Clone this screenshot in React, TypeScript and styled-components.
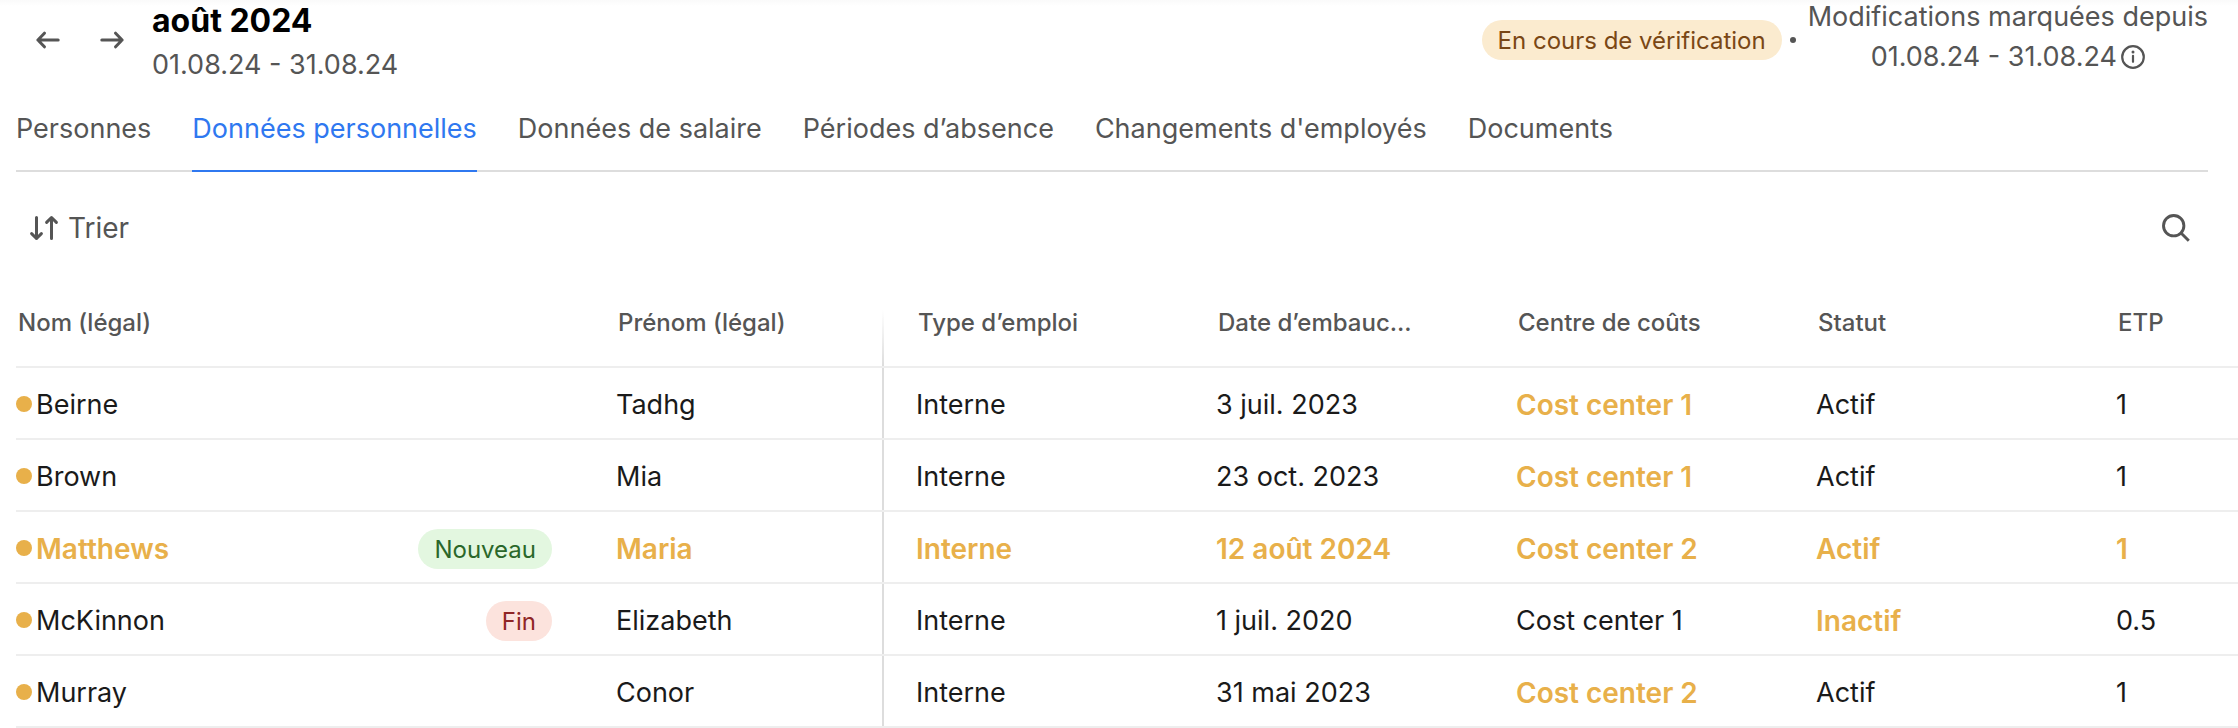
import React from 'react';
import styled, { createGlobalStyle, css } from 'styled-components';

const color = {
  text: '#1a1a1a',
  muted: '#555555',
  accent: '#2f78f0',
  changed: '#e8b04a',
  line: '#dddddd',
  rowLine: '#eeeeee',
};

const GlobalStyle = createGlobalStyle`
  *, *::before, *::after { box-sizing: border-box; }
  body {
    margin: 0;
    background: #ffffff;
    color: ${color.text};
    font: 400 27px/40px Inter, "Liberation Sans", sans-serif;
    overflow-x: hidden;
  }
  button { font: inherit; color: inherit; background: none; border: 0; padding: 0; cursor: pointer; }
`;

const Page = styled.main`
  background: linear-gradient(#fafafa, #ffffff) top / 100% 6px no-repeat;
`;

const Header = styled.header`
  display: flex;
  align-items: center;
  justify-content: space-between;
  height: 84px;
  padding: 0 30px 4px 24px;
`;

const Group = styled.div`
  display: flex;
  align-items: center;
`;

const IconButton = styled.button`
  display: flex;
  align-items: center;
  justify-content: center;
  width: 48px;
  height: 48px;
  color: ${color.muted};
`;

const Pager = styled.nav`
  display: flex;
  gap: 16px;
  margin-right: 16px;
`;

const Heading = styled.div`
  padding-top: 6px;
`;

const Title = styled.h1`
  margin: 0;
  font-size: 32px;
  font-weight: 700;
  line-height: 44px;
  color: #000000;
`;

const Period = styled.p`
  margin: 0;
  line-height: 44px;
  color: ${color.muted};
`;

const tones = {
  warning: css`background: #fbebcf; color: #7a4715;`,
  positive: css`background: #e3f7e0; color: #2a672a;`,
  negative: css`background: #fce3dd; color: #8f2626;`,
};

type Tone = keyof typeof tones;

const Badge = styled.span<{ $tone: Tone }>`
  display: inline-block;
  height: 40px;
  padding: 1px 16px 0;
  border-radius: 20px;
  font-size: 24px;
  font-weight: 400;
  line-height: 40px;
  white-space: nowrap;
  ${({ $tone }) => tones[$tone]}
`;

const Bullet = styled.span`
  width: 6px;
  height: 6px;
  margin: 0 12px 0 8px;
  border-radius: 50%;
  background: ${color.muted};
`;

const Tracking = styled.div`
  padding-bottom: 6px;
  color: ${color.muted};
  text-align: center;
`;

const TrackingPeriod = styled.div`
  display: flex;
  align-items: center;
  justify-content: center;
  gap: 4px;
`;

const Tabs = styled.nav`
  display: flex;
  gap: 41px;
  margin: 0 30px 0 16px;
  border-bottom: 2px solid ${color.line};
`;

const Tab = styled.a<{ $active?: boolean }>`
  height: 88px;
  margin-bottom: -2px;
  padding-top: 25px;
  border-bottom: 2px solid ${({ $active }) => ($active ? color.accent : 'transparent')};
  color: ${({ $active }) => ($active ? color.accent : color.muted)};
  text-decoration: none;
  white-space: nowrap;
`;

const Toolbar = styled.div`
  display: flex;
  align-items: center;
  justify-content: space-between;
  height: 112px;
  padding: 0 38px 0 28px;
`;

const SortButton = styled.button`
  display: flex;
  align-items: center;
  gap: 8px;
  height: 48px;
  && {
    color: ${color.muted};
    font-size: 28px;
  }
`;

const TableArea = styled.div`
  padding-left: 16px;
  overflow: hidden;
`;

const Table = styled.table`
  width: 100%;
  table-layout: fixed;
  border-collapse: separate;
  border-spacing: 0;
`;

const Col = styled.col<{ $width?: number }>`
  width: ${({ $width }) => ($width ? `${$width}px` : 'auto')};
`;

const HeadCell = styled.th<{ $pinned?: boolean }>`
  height: 84px;
  padding: 0 34px 4px;
  border-bottom: 2px solid ${color.rowLine};
  background: ${({ $pinned }) =>
    $pinned ? `linear-gradient(#ffffff 32%, ${color.line}) right / 2px 100% no-repeat` : 'none'};
  color: ${color.muted};
  font-size: 24px;
  font-weight: 500;
  text-align: left;
  white-space: nowrap;
  &:first-child { padding-left: 2px; }
  &:last-child { padding-right: 0; }
`;

const Cell = styled.td<{ $pinned?: boolean; $changed?: boolean }>`
  height: 72px;
  padding: 4px 32px 0;
  border-bottom: 2px solid ${color.rowLine};
  background: ${({ $pinned }) =>
    $pinned ? `linear-gradient(${color.line}, ${color.line}) right / 2px 100% no-repeat` : 'none'};
  color: ${({ $changed }) => ($changed ? color.changed : color.text)};
  font-size: ${({ $changed }) => ($changed ? 28 : 27)}px;
  font-weight: ${({ $changed }) => ($changed ? 600 : 400)};
  white-space: nowrap;
  &:first-child { padding-left: 0; }
  &:last-child { padding-right: 0; }
`;

const Name = styled.div`
  display: flex;
  align-items: center;
  gap: 4px;
  & > ${Badge} { margin-left: auto; }
`;

const Dot = styled.span`
  flex: none;
  width: 16px;
  height: 16px;
  margin-bottom: 2px;
  border-radius: 50%;
  background: ${color.changed};
`;

const strokeProps = {
  fill: 'none',
  stroke: 'currentColor',
  strokeLinecap: 'round' as const,
  strokeLinejoin: 'round' as const,
};

const ArrowLeft = () => (
  <svg width="24" height="24" viewBox="0 0 24 24" strokeWidth="3" aria-hidden="true" {...strokeProps}>
    <path d="M22.2 12H2M8.4 5.2 1.9 12l6.5 6.8" />
  </svg>
);

const ArrowRight = () => (
  <svg width="24" height="24" viewBox="0 0 24 24" strokeWidth="3" aria-hidden="true" {...strokeProps}>
    <path d="M1.8 12H22M15.6 5.2l6.5 6.8-6.5 6.8" />
  </svg>
);

const SortIcon = () => (
  <svg width="32" height="32" viewBox="0 0 32 32" strokeWidth="3" aria-hidden="true" {...strokeProps}>
    <path d="M8.5 5.5v21M3.6 21.6l4.9 4.9 4.9-4.9M23.5 26.5v-21M18.6 10.4l4.9-4.9 4.9 4.9" />
  </svg>
);

const SearchIcon = () => (
  <svg width="32" height="32" viewBox="0 0 32 32" strokeWidth="2.9" aria-hidden="true" {...strokeProps} strokeLinecap="butt">
    <circle cx="13.7" cy="13.7" r="10.2" />
    <path d="M21 21l7.8 7.8" />
  </svg>
);

const InfoIcon = () => (
  <svg width="24" height="24" viewBox="0 0 24 24" strokeWidth="2.2" aria-hidden="true" {...strokeProps}>
    <circle cx="12" cy="12" r="10.8" />
    <path d="M12 10.8v6" />
    <circle cx="12" cy="7" r="1.5" fill="currentColor" stroke="none" />
  </svg>
);

const tabs = [
  'Personnes',
  'Données personnelles',
  'Données de salaire',
  'Périodes d’absence',
  "Changements d'employés",
  'Documents',
];

const columns: { label: string; width?: number; pinned?: boolean }[] = [
  { label: 'Nom (légal)', width: 568 },
  { label: 'Prénom (légal)', width: 300, pinned: true },
  { label: 'Type d’emploi', width: 300 },
  { label: 'Date d’embauc...', width: 300 },
  { label: 'Centre de coûts', width: 300 },
  { label: 'Statut', width: 300 },
  { label: 'ETP' },
];

interface Employee {
  values: string[];
  changed: number[];
  badge?: { tone: Tone; label: string };
}

const employees: Employee[] = [
  { values: ['Beirne', 'Tadhg', 'Interne', '3 juil. 2023', 'Cost center 1', 'Actif', '1'], changed: [4] },
  { values: ['Brown', 'Mia', 'Interne', '23 oct. 2023', 'Cost center 1', 'Actif', '1'], changed: [4] },
  {
    values: ['Matthews', 'Maria', 'Interne', '12 août 2024', 'Cost center 2', 'Actif', '1'],
    changed: [0, 1, 2, 3, 4, 5, 6],
    badge: { tone: 'positive', label: 'Nouveau' },
  },
  {
    values: ['McKinnon', 'Elizabeth', 'Interne', '1 juil. 2020', 'Cost center 1', 'Inactif', '0.5'],
    changed: [5],
    badge: { tone: 'negative', label: 'Fin' },
  },
  { values: ['Murray', 'Conor', 'Interne', '31 mai 2023', 'Cost center 2', 'Actif', '1'], changed: [4] },
];

export default function App() {
  return (
    <Page>
      <GlobalStyle />
      <Header>
        <Group>
          <Pager aria-label="Période">
            <IconButton type="button" aria-label="Mois précédent"><ArrowLeft /></IconButton>
            <IconButton type="button" aria-label="Mois suivant"><ArrowRight /></IconButton>
          </Pager>
          <Heading>
            <Title>août 2024</Title>
            <Period>01.08.24 - 31.08.24</Period>
          </Heading>
        </Group>
        <Group>
          <Badge $tone="warning">En cours de vérification</Badge>
          <Bullet />
          <Tracking>
            <div>Modifications marquées depuis</div>
            <TrackingPeriod>01.08.24 - 31.08.24<InfoIcon /></TrackingPeriod>
          </Tracking>
        </Group>
      </Header>
      <Tabs aria-label="Sections">
        {tabs.map((tab, i) => (
          <Tab key={tab} href="#" $active={i === 1} aria-current={i === 1 ? 'page' : undefined}>{tab}</Tab>
        ))}
      </Tabs>
      <Toolbar>
        <SortButton type="button"><SortIcon />Trier</SortButton>
        <IconButton type="button" aria-label="Rechercher"><SearchIcon /></IconButton>
      </Toolbar>
      <TableArea>
        <Table>
          <colgroup>
            {columns.map((c) => <Col key={c.label} $width={c.width} />)}
          </colgroup>
          <thead>
            <tr>
              {columns.map((c) => <HeadCell key={c.label} scope="col" $pinned={c.pinned}>{c.label}</HeadCell>)}
            </tr>
          </thead>
          <tbody>
            {employees.map((e) => (
              <tr key={e.values[0]}>
                {e.values.map((value, i) => (
                  <Cell key={columns[i].label} $pinned={columns[i].pinned} $changed={e.changed.includes(i)}>
                    {i === 0 ? (
                      <Name>
                        <Dot />
                        {value}
                        {e.badge && <Badge $tone={e.badge.tone}>{e.badge.label}</Badge>}
                      </Name>
                    ) : value}
                  </Cell>
                ))}
              </tr>
            ))}
          </tbody>
        </Table>
      </TableArea>
    </Page>
  );
}
